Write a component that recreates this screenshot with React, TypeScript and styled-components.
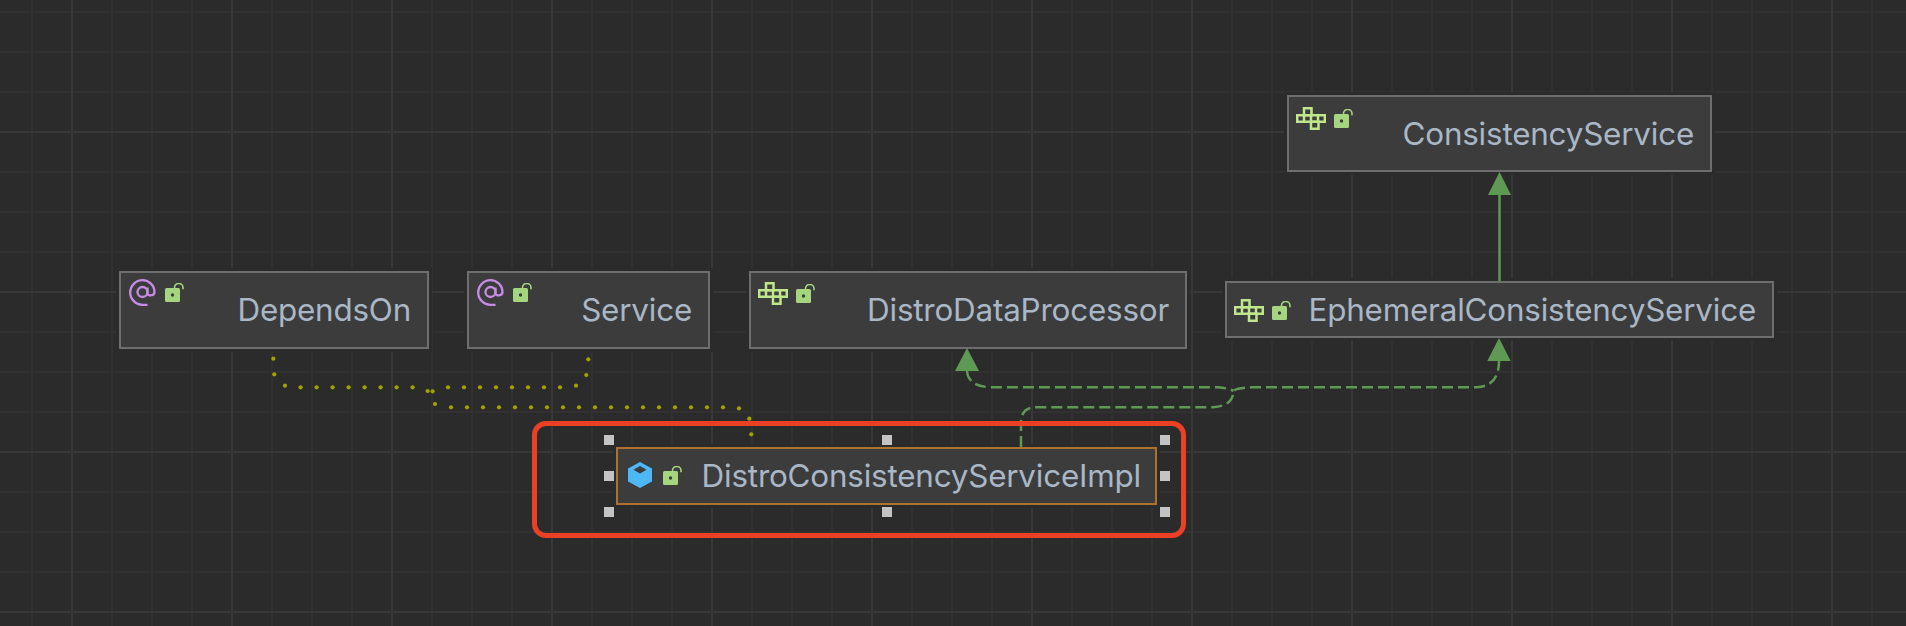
import React from 'react';
import styled, { createGlobalStyle } from 'styled-components';

const GlobalStyle = createGlobalStyle`
    html, body {
        margin: 0;
        padding: 0;
        background: #2b2b2b;
    }
`;

const Canvas = styled.div`
    position: relative;
    width: 1906px;
    height: 626px;
    overflow: hidden;
    background-color: #2b2b2b;
    background-image:
        linear-gradient(to right, #383838 2px, transparent 2px),
        linear-gradient(to bottom, #383838 2px, transparent 2px),
        linear-gradient(to right, #313131 2px, transparent 2px),
        linear-gradient(to bottom, #313131 2px, transparent 2px);
    background-size: 160px 160px, 160px 160px, 40px 40px, 40px 40px;
    background-position: 71px 0, 0 131px, 31px 0, 0 11px;
`;

const Wires = styled.svg`
    position: absolute;
    inset: 0;
`;

const NodeBox = styled.div<{ $x: number; $y: number; $w: number; $h: number; $selected?: boolean }>`
    position: absolute;
    left: ${p => p.$x}px;
    top: ${p => p.$y}px;
    width: ${p => p.$w}px;
    height: ${p => p.$h}px;
    box-sizing: border-box;
    display: flex;
    align-items: center;
    justify-content: flex-end;
    padding-right: ${p => (p.$selected ? 14 : 16)}px;
    background: #3c3c3c;
    border: 2px solid ${p => (p.$selected ? '#b0702f' : '#6e6e6e')};
    box-shadow: 0 0 0 3px #2b2b2b;
`;

const NodeIcons = styled.div<{ $top: number; $left: number; $gap: number }>`
    position: absolute;
    top: ${p => p.$top}px;
    left: ${p => p.$left}px;
    display: flex;
    align-items: center;
    gap: ${p => p.$gap}px;
`;

const NodeLabel = styled.span`
    font-family: Inter, 'Liberation Sans', sans-serif;
    font-size: 31.4px;
    line-height: 36px;
    letter-spacing: -0.2px;
    color: #a9b7c6;
    white-space: nowrap;
`;

const Highlight = styled.div`
    position: absolute;
    left: 532px;
    top: 421px;
    width: 654px;
    height: 117px;
    box-sizing: border-box;
    border: 5px solid #ea4126;
    border-radius: 14px;
`;

const Handle = styled.div<{ $x: number; $y: number }>`
    position: absolute;
    left: ${p => p.$x}px;
    top: ${p => p.$y}px;
    width: 10px;
    height: 10px;
    background: #c4c4c4;
`;

const AnnotationIcon = () => (
    <svg width="27" height="27" viewBox="0 0 27 27" fill="none" stroke="#c78de6" strokeWidth="2.3">
        <circle cx="13.500" cy="13" r="5" />
        <path d="M18.500 8.500v6c0 2.800 7 2.800 7-1.500C25.500 6.500 20 1.200 13.500 1.200 6.800 1.200 1.200 6.800 1.200 13.500S6.800 25.800 13.500 25.800h5" />
    </svg>
);

const InterfaceIcon = () => (
    <svg width="30" height="23" viewBox="0 0 30 23" fill="none" stroke="#c0e68b" strokeWidth="2.500">
        <path d="M8 1.200h7.500v7H8z" />
        <path d="M1.200 8.200h27.600v6.600H1.200z" />
        <path d="M8 8v7M15 8v7M22 8v7" />
        <path d="M15 14.800h7.500v7H15z" />
    </svg>
);

const ClassIcon = () => (
    <svg width="24" height="26" viewBox="0 0 24 26">
        <path fill="#4db8f5" fillRule="evenodd" d="M12 0L24 6.500v13L12 26 0 19.500v-13zM12 4L5.500 7.800 12 11.500l6.500-3.700z" />
    </svg>
);

const LockIcon = () => (
    <svg width="19" height="19" viewBox="0 0 19 19">
        <rect x="0" y="5" width="15" height="14" rx="1.500" fill="#a5d67f" />
        <circle cx="7.500" cy="12" r="1.700" fill="#3c3c3c" />
        <path d="M9.500 5.500V4.800a4 4 0 0 1 8.500-0.300v1.800" fill="none" stroke="#a5d67f" strokeWidth="1.600" />
    </svg>
);

interface INode {
    name: string;
    x: number;
    y: number;
    w: number;
    h: number;
    icon: React.ReactNode;
    iconTop: number;
    iconLeft: number;
    iconGap: number;
    selected?: boolean;
}

const nodes: INode[] = [
    { name: 'DependsOn', x: 119, y: 271, w: 310, h: 78, icon: <AnnotationIcon />, iconTop: 6, iconLeft: 8, iconGap: 9 },
    { name: 'Service', x: 467, y: 271, w: 243, h: 78, icon: <AnnotationIcon />, iconTop: 6, iconLeft: 8, iconGap: 9 },
    { name: 'DistroDataProcessor', x: 749, y: 271, w: 438, h: 78, icon: <InterfaceIcon />, iconTop: 9, iconLeft: 7, iconGap: 8 },
    { name: 'EphemeralConsistencyService', x: 1225, y: 281, w: 549, h: 57, icon: <InterfaceIcon />, iconTop: 16, iconLeft: 7, iconGap: 8 },
    { name: 'ConsistencyService', x: 1287, y: 95, w: 425, h: 77, icon: <InterfaceIcon />, iconTop: 10, iconLeft: 7, iconGap: 8 },
    {
        name: 'DistroConsistencyServiceImpl',
        x: 616,
        y: 447,
        w: 541,
        h: 58,
        icon: <ClassIcon />,
        iconTop: 13,
        iconLeft: 10,
        iconGap: 11,
        selected: true,
    },
];

const handles = [
    [604, 435],
    [882, 435],
    [1160, 435],
    [604, 471],
    [1160, 471],
    [604, 507],
    [882, 507],
    [1160, 507],
];

const upperRow = [300.6, 316.6, 332.6, 348.6, 364.6, 380.6, 396.6, 412.6, 448, 464, 480, 496, 512, 528, 544, 560];
const lowerRow = [451, 467, 483, 499, 515, 531, 547, 563, 579, 595, 611, 627, 643, 659, 675, 691, 707, 723];

const dots = [
    [273.3, 358.7],
    [274.3, 374.3],
    [285, 385.7],
    ...upperRow.map(x => [x, 387.3]),
    [427.6, 391],
    [432.6, 391.3],
    [576, 385.7],
    [586.3, 375],
    [588.3, 359.3],
    [435, 404],
    ...lowerRow.map(x => [x, 407.3]),
    [739, 408.3],
    [749.3, 418.7],
    [751.3, 434.3],
];

const App: React.FC = () => (
    <Canvas>
        <GlobalStyle />
        {nodes.map(node => (
            <NodeBox key={node.name} $x={node.x} $y={node.y} $w={node.w} $h={node.h} $selected={node.selected}>
                <NodeIcons $top={node.iconTop} $left={node.iconLeft} $gap={node.iconGap}>
                    {node.icon}
                    <LockIcon />
                </NodeIcons>
                <NodeLabel>{node.name}</NodeLabel>
            </NodeBox>
        ))}
        <Wires width="1906" height="626" viewBox="0 0 1906 626" fill="none">
            {dots.map(([cx, cy]) => (
                <circle key={`${cx}-${cy}`} cx={cx} cy={cy} r="2.1" fill="#a3a300" />
            ))}
            <path
                d="M1021 447V421Q1022 407 1037 407.300H1213Q1233 406 1233.500 391Q1236 388 1252 387.300H1477Q1499 386 1499 361"
                stroke="#5f9a55"
                strokeWidth="2.500"
                strokeDasharray="11 5"
            />
            <path
                d="M967 371Q968 386 990 387.300H1218Q1228 388 1233.500 391"
                stroke="#5f9a55"
                strokeWidth="2.500"
                strokeDasharray="11 5"
            />
            <path d="M1499.500 281V190" stroke="#5f9a55" strokeWidth="2.500" />
            <polygon points="1499.500,172 1488,195 1511,195" fill="#5f9a55" />
            <polygon points="1499,338 1487.300,361 1510.700,361" fill="#5f9a55" />
            <polygon points="967,348 955,371 979,371" fill="#5f9a55" />
        </Wires>
        <Highlight />
        {handles.map(([x, y]) => (
            <Handle key={`${x}-${y}`} $x={x} $y={y} />
        ))}
    </Canvas>
);

export default App;
